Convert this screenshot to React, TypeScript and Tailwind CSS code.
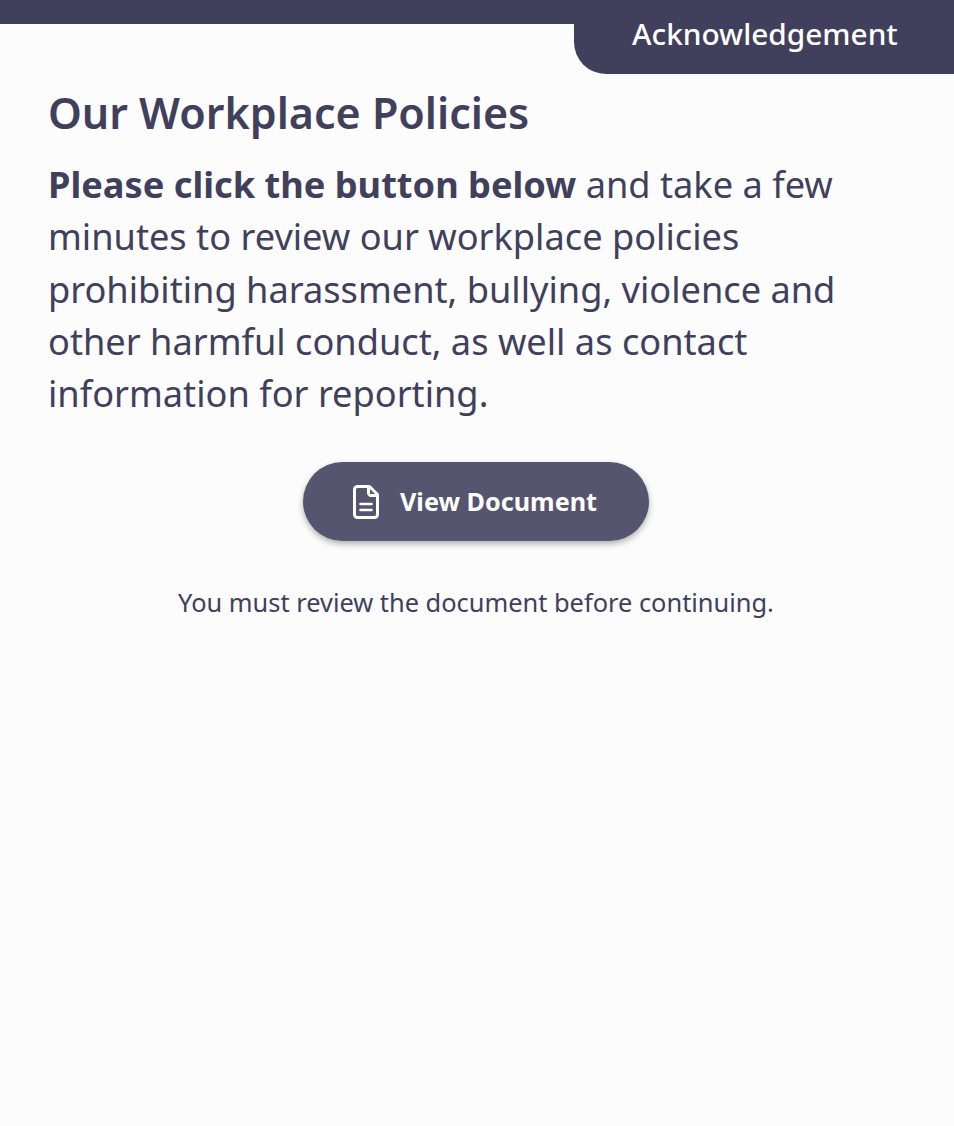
export default function App() {
  return (
    <div className="min-h-[1126px] bg-[#fcfcfc] text-[#40405c] font-['Noto_Sans','Open_Sans',sans-serif]">
      <div className="h-6 bg-[#40405c]" />
      <div className="flex justify-end">
        <div className="h-[50px] w-[380px] rounded-bl-[32px] bg-[#40405c] pl-[58px] text-[29.8px] leading-[20px] font-medium text-white">
          Acknowledgement
        </div>
      </div>
      <div className="pl-12 pr-[50px]">
        <h1 className="mt-[11px] text-[43px] leading-[56px] font-semibold">Our Workplace Policies</h1>
        <p className="mt-[17px] text-[36.2px] leading-[52.3px] pr-[50px]">
          <b>Please click the button below</b> and take a few minutes to review our workplace policies prohibiting harassment, bullying, violence and other harmful conduct, as well as contact information for reporting.
        </p>
        <div className="mt-[43px] flex justify-center">
          <button className="flex h-[79px] w-[346px] items-center justify-center gap-[21px] rounded-[40px] bg-[#55556f] pr-[2px] text-[25.2px] font-bold text-white shadow-[0_3px_6px_rgba(0,0,0,0.3)]">
            <svg width="26" height="34" viewBox="0 0 26 34" fill="none" stroke="currentColor" strokeWidth="3" strokeLinejoin="round">
              <path d="M4.5 1.5H16.5L24.5 9.5V29.5A3 3 0 0 1 21.5 32.5H4.5A3 3 0 0 1 1.5 29.5V4.5A3 3 0 0 1 4.5 1.5Z" />
              <path d="M15.5 2V8A2.5 2.5 0 0 0 18 10.5H24" />
              <path d="M7.5 19H18.5M7.5 25H18.5" strokeLinecap="round" strokeWidth="2.6" />
            </svg>
            View Document
          </button>
        </div>
        <p className="mt-[43px] text-center text-[25.4px] leading-[36px]">You must review the document before continuing.</p>
      </div>
    </div>
  );
}
